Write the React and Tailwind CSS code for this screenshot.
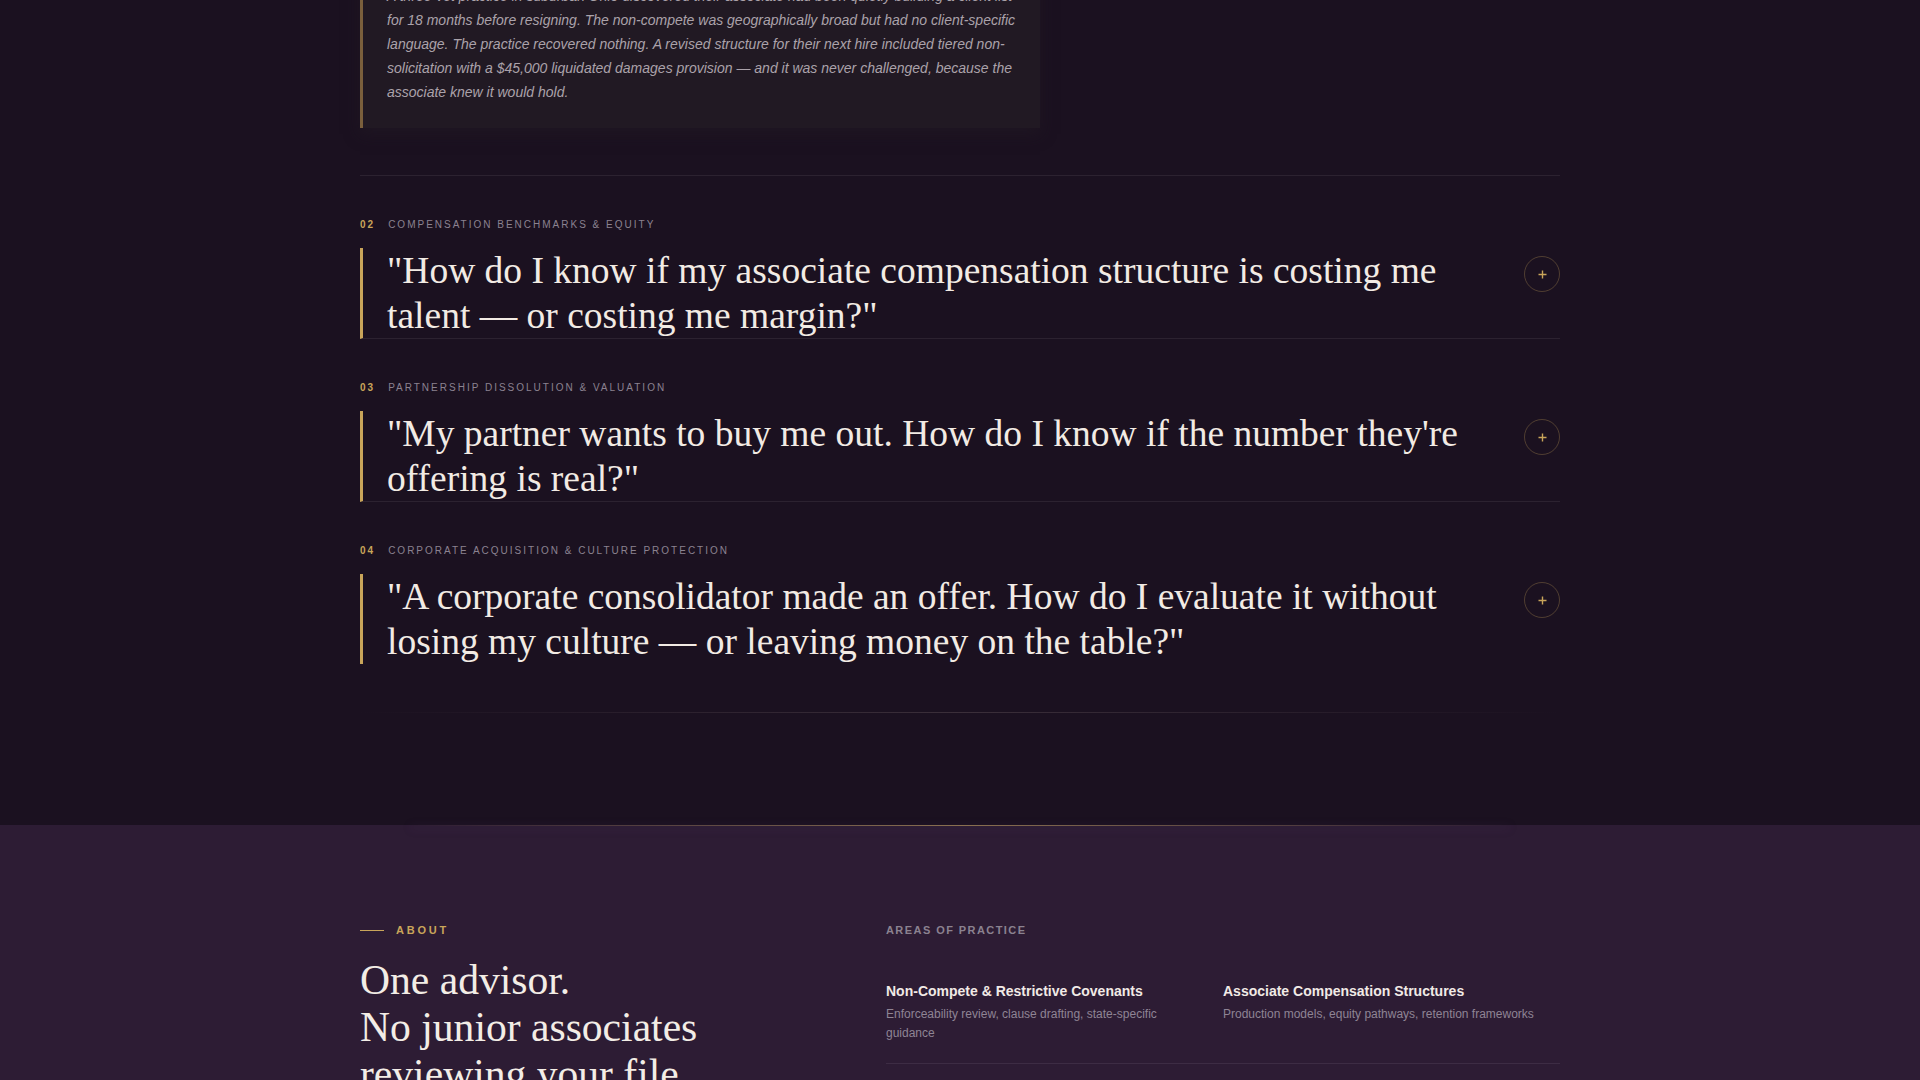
import React from "react";

const questions = [
  {
    num: "02",
    topic: "Compensation Benchmarks & Equity",
    text: '"How do I know if my associate compensation structure is costing me talent — or costing me margin?"',
  },
  {
    num: "03",
    topic: "Partnership Dissolution & Valuation",
    text: '"My partner wants to buy me out. How do I know if the number they\'re offering is real?"',
  },
  {
    num: "04",
    topic: "Corporate Acquisition & Culture Protection",
    text: '"A corporate consolidator made an offer. How do I evaluate it without losing my culture — or leaving money on the table?"',
  },
];

const practiceAreas = [
  {
    title: "Non-Compete & Restrictive Covenants",
    desc: "Enforceability review, clause drafting, state-specific guidance",
  },
  {
    title: "Associate Compensation Structures",
    desc: "Production models, equity pathways, retention frameworks",
  },
  {
    title: "Partnership Dissolution & Buyouts",
    desc: "Valuation review, buy-sell agreements, exit negotiation",
  },
  {
    title: "Corporate Acquisition Review",
    desc: "LOI analysis, earn-out terms, culture and staff protection",
  },
];

const PlusIcon = () => (
  <svg width="9" height="9" viewBox="0 0 9 9" fill="none">
    <path d="M4.5 0.5v8M0.5 4.5h8" stroke="#c9a55a" strokeWidth="1.4" />
  </svg>
);

// Single expandable question row
const QuestionItem = ({ item, last }) => (
  <div className="pt-10">
    <div className="flex items-center gap-[13px] pt-px text-[10px] leading-4 tracking-[0.2em] uppercase font-['Liberation_Sans',Arial,sans-serif]">
      <span className="font-bold text-[#c9a55a]">{item.num}</span>
      <span className="text-[#8b8290]">{item.topic}</span>
    </div>
    <div
      className={`mt-[15px] flex items-start gap-12 border-l-[3px] border-[#c9a55a] pl-6 ${
        last ? "" : "border-b border-b-[#2c2230]"
      }`}
    >
      <h3 className="flex-1 text-[37.5px] leading-[45px] text-[#f2ebe4] font-['Liberation_Serif','Times_New_Roman',serif]">
        {item.text}
      </h3>
      <button className="mt-2 flex h-9 w-9 shrink-0 items-center justify-center rounded-full border border-[#c9a55a]/30">
        <PlusIcon />
      </button>
    </div>
  </div>
);

export default function App() {
  return (
    <div className="min-h-screen bg-[#1b1120] font-['Liberation_Sans',Arial,sans-serif]">
      {/* Questions section */}
      <section className="bg-[#1b1120] pb-28">
        <div className="mx-auto w-[1200px]">
          <div className="-mt-[40px] w-[680px] border-l-[3px] border-[#7a5f3c] bg-[#211923] py-6 pl-6 pr-[22px] shadow-[0_6px_14px_rgba(33,25,35,0.6)]">
            <p className="text-[14px] italic leading-6 text-[#aba2aa]">
              A three-vet practice in suburban Ohio discovered their associate had been quietly building a client list
              for 18 months before resigning. The non-compete was geographically broad but had no client-specific
              language. The practice recovered nothing. A revised structure for their next hire included tiered
              non-solicitation with a $45,000 liquidated damages provision — and it was never challenged, because the
              associate knew it would hold.
            </p>
          </div>

          <div className="mt-[47px] h-px bg-[#2c2230]" />

          {questions.map((q, i) => (
            <QuestionItem key={q.num} item={q} last={i === questions.length - 1} />
          ))}

          <div className="mt-12 h-px bg-gradient-to-r from-transparent via-[#3b2f3a] to-transparent" />
        </div>
      </section>

      {/* About section */}
      <section className="bg-[#2d1c34] pb-24">
        <div className="mx-auto h-px w-[1100px] bg-gradient-to-r from-transparent via-[#8a7050] to-transparent shadow-[0_2px_10px_rgba(120,80,160,0.35)]" />
        <div className="mx-auto grid w-[1200px] grid-cols-[430px_1fr] gap-x-24 pt-24">
          <div>
            <div className="flex items-center gap-3">
              <span className="h-px w-6 bg-[#c9a55a]" />
              <span className="text-[11px] font-bold leading-4 tracking-[0.25em] text-[#c9a55a]">ABOUT</span>
            </div>
            <h2 className="mt-[19px] text-[41.6px] leading-[47px] text-[#f3ede6] font-['Liberation_Serif','Times_New_Roman',serif]">
              One advisor.
              <br />
              No junior associates
              <br />
              reviewing your file.
            </h2>
            <p className="mt-8 text-[15px] leading-7 text-[#a79dab]">
              Every engagement is handled personally, from the first call through the final signature.
            </p>
          </div>

          <div>
            <div className="text-[11px] font-bold leading-4 tracking-[0.13em] text-[#8b8290]">AREAS OF PRACTICE</div>
            <div className="mt-6 grid grid-cols-2">
              {practiceAreas.map((a) => (
                <div key={a.title} className="border-b border-[#3d2c44] pb-5 pt-[19px] pr-6">
                  <div className="text-[14px] font-bold leading-5 text-[#f1eae6]">{a.title}</div>
                  <div className="mt-1 text-[12px] leading-[19px] text-[#8f8494]">{a.desc}</div>
                </div>
              ))}
            </div>
          </div>
        </div>
      </section>
    </div>
  );
}
